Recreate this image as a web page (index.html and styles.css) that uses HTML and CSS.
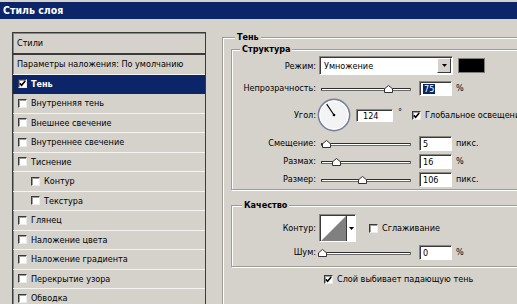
FILE: index.html
```html
<!DOCTYPE html>
<html lang="ru">

<head>
    <meta charset="utf-8">
    <title>Стиль слоя</title>
    <link rel="stylesheet" href="styles.css">
</head>

<body>
    <div class="titlebar">Стиль слоя</div>
    <div class="main">
        <!-- left: list of effects -->
        <div class="styles-list">
            <div class="list-head">Стили</div>
            <div class="list-row">Параметры наложения: По умолчанию</div>
            <div class="list-row selected">
                <span class="check"><svg width="7" height="7" viewBox="0 0 7 7"><path d="M0.8 3.4 L2.6 5.3 L6.2 1" fill="none" stroke="#000" stroke-width="1.6"/></svg></span>Тень
            </div>
            <div class="list-row"><span class="check"></span>Внутренняя тень</div>
            <div class="list-row"><span class="check"></span>Внешнее свечение</div>
            <div class="list-row"><span class="check"></span>Внутреннее свечение</div>
            <div class="list-row"><span class="check"></span>Тиснение</div>
            <div class="list-row sub"><span class="check"></span>Контур</div>
            <div class="list-row sub"><span class="check"></span>Текстура</div>
            <div class="list-row"><span class="check"></span>Глянец</div>
            <div class="list-row"><span class="check"></span>Наложение цвета</div>
            <div class="list-row"><span class="check"></span>Наложение градиента</div>
            <div class="list-row"><span class="check"></span>Перекрытие узора</div>
            <div class="list-row"><span class="check"></span>Обводка</div>
        </div>

        <!-- right: drop shadow options -->
        <div class="options">
            <div class="group outer">
                <span class="group-title title-outer">Тень</span>

                <div class="group structure">
                    <span class="group-title">Структура</span>
                    <div class="row row-mode">
                        <span class="label">Режим:</span>
                        <div class="select">
                            <span class="select-text">Умножение</span>
                            <span class="select-btn"><svg width="5" height="3" viewBox="0 0 5 3"><path d="M0 0 H5 L2.5 3 Z" fill="#000"/></svg></span>
                        </div>
                        <span class="swatch"></span>
                    </div>
                    <div class="row row-opacity">
                        <span class="label">Непрозрачность:</span>
                        <div class="slider"><svg class="thumb" style="left: 75%" width="9" height="8" viewBox="0 0 9 8"><path d="M0.5 7.5 V3.8 L4.5 0.5 L8.5 3.8 V7.5 Z" fill="#fff" stroke="#333"/></svg></div>
                        <span class="field"><span class="sel">75</span></span>
                        <span class="unit">%</span>
                    </div>
                    <div class="row row-angle">
                        <span class="label">Угол:</span>
                        <svg class="dial" width="34" height="34" viewBox="0 0 34 34">
                            <circle cx="17" cy="17" r="15.6" fill="#f3f3f6" stroke="#77809e" stroke-width="1.6"/>
                            <circle cx="17" cy="17" r="14.2" fill="none" stroke="#fff" stroke-width="1"/>
                            <line x1="17" y1="17" x2="9.7" y2="6.1" stroke="#000" stroke-width="1.1"/>
                            <circle cx="17" cy="17" r="1.3" fill="#000"/>
                        </svg>
                        <span class="field field-angle">124</span>
                        <span class="degree">°</span>
                        <span class="check check-light"><svg width="7" height="7" viewBox="0 0 7 7"><path d="M0.8 3.4 L2.6 5.3 L6.2 1" fill="none" stroke="#000" stroke-width="1.6"/></svg></span>
                        <span class="check-label">Глобальное освещение</span>
                    </div>
                    <div class="row row-slider">
                        <span class="label">Смещение:</span>
                        <div class="slider"><svg class="thumb" style="left: 5%" width="9" height="8" viewBox="0 0 9 8"><path d="M0.5 7.5 V3.8 L4.5 0.5 L8.5 3.8 V7.5 Z" fill="#fff" stroke="#333"/></svg></div>
                        <span class="field">5</span>
                        <span class="unit">пикс.</span>
                    </div>
                    <div class="row row-slider">
                        <span class="label">Размах:</span>
                        <div class="slider"><svg class="thumb" style="left: 16%" width="9" height="8" viewBox="0 0 9 8"><path d="M0.5 7.5 V3.8 L4.5 0.5 L8.5 3.8 V7.5 Z" fill="#fff" stroke="#333"/></svg></div>
                        <span class="field">16</span>
                        <span class="unit">%</span>
                    </div>
                    <div class="row row-slider">
                        <span class="label">Размер:</span>
                        <div class="slider"><svg class="thumb" style="left: 45%" width="9" height="8" viewBox="0 0 9 8"><path d="M0.5 7.5 V3.8 L4.5 0.5 L8.5 3.8 V7.5 Z" fill="#fff" stroke="#333"/></svg></div>
                        <span class="field">106</span>
                        <span class="unit">пикс.</span>
                    </div>
                </div>

                <div class="group quality">
                    <span class="group-title title-quality">Качество</span>
                    <div class="row row-contour">
                        <span class="label">Контур:</span>
                        <div class="contour">
                            <svg class="contour-preview" width="25" height="25" viewBox="0 0 25 25">
                                <rect width="25" height="25" fill="#fff"/>
                                <path d="M0 25 L25 0 V25 Z" fill="#808080"/>
                            </svg>
                            <span class="contour-btn"><svg width="5" height="3" viewBox="0 0 5 3"><path d="M0 0 H5 L2.5 3 Z" fill="#000"/></svg></span>
                        </div>
                        <span class="check check-aa"></span>
                        <span class="check-label">Сглаживание</span>
                    </div>
                    <div class="row row-slider row-noise">
                        <span class="label">Шум:</span>
                        <div class="slider"><svg class="thumb" style="left: 0%" width="9" height="8" viewBox="0 0 9 8"><path d="M0.5 7.5 V3.8 L4.5 0.5 L8.5 3.8 V7.5 Z" fill="#fff" stroke="#333"/></svg></div>
                        <span class="field">0</span>
                        <span class="unit">%</span>
                    </div>
                </div>

                <div class="knockout">
                    <span class="check"><svg width="7" height="7" viewBox="0 0 7 7"><path d="M0.8 3.4 L2.6 5.3 L6.2 1" fill="none" stroke="#000" stroke-width="1.6"/></svg></span>
                    <span class="check-label">Слой выбивает падающую тень</span>
                </div>
            </div>
        </div>
    </div>
</body>

</html>
```

FILE: styles.css
```css
body {
    margin: 0;
    overflow: hidden;
    background-color: #d5d2cc;
    font-family: "DejaVu Sans Condensed", "DejaVu Sans", sans-serif;
    font-size: 9px;
    color: #000;
}

/* window title */
.titlebar {
    margin-top: 2px;
    height: 17px;
    line-height: 17px;
    padding-left: 3px;
    background-color: #0c2468;
    color: #fff;
    font-weight: bold;
    font-size: 10.5px;
}

.main {
    display: flex;
    align-items: flex-start;
    padding: 13px 0 0 12px;
}

/* effects list */
.styles-list {
    flex: none;
    width: 192px;
    border: 1px solid #3a3a3a;
    border-bottom: none;
    box-shadow: inset 1px 1px 0 #8a8780;
}

.list-head {
    height: 20px;
    line-height: 20px;
    padding-left: 4px;
    border-bottom: 2px solid #3a3a3a;
}

.list-row {
    display: flex;
    align-items: center;
    height: 18.5px;
    padding-left: 4px;
    border-bottom: 1px solid #f4f3ef;
    white-space: nowrap;
}

.list-row.sub {
    padding-left: 17px;
}

.list-row.selected {
    background-color: #0c2468;
    color: #fff;
    font-weight: bold;
    border-bottom-color: #0c2468;
}

.check {
    flex: none;
    display: inline-flex;
    align-items: center;
    justify-content: center;
    box-sizing: border-box;
    width: 9px;
    height: 9px;
    margin: 0 4px 0 1px;
    background-color: #fff;
    border: 1px solid;
    border-color: #3a3a3a #ecebe7 #ecebe7 #3a3a3a;
    box-shadow: inset 1px 1px 0 #a09d96;
}

/* option groups */
.options {
    flex: none;
    margin: 5px 0 0 16px;
}

.group {
    position: relative;
    border: 1px solid #9f9c95;
    box-shadow: inset 1px 1px 0 #fff, 1px 1px 0 #fff;
}

.group-title {
    position: absolute;
    top: -6px;
    left: 8px;
    padding: 0 2px;
    line-height: 11px;
    background-color: #d5d2cc;
    font-weight: bold;
}

.title-outer {
    left: 12px;
}

.title-quality {
    left: 10px;
}

.outer {
    width: 340px;
    height: 300px;
    border-right: none;
}

.structure {
    width: 330px;
    margin: 11px 0 0 8px;
    padding: 6px 0 1px;
    border-right: none;
}

.quality {
    width: 330px;
    margin: 15px 0 0 8px;
    padding: 8px 0 6px;
    border-right: none;
}

.row {
    display: flex;
    align-items: center;
    white-space: nowrap;
}

.label {
    flex: none;
    width: 84px;
    margin-right: 3px;
    text-align: right;
}

.row-mode {
    height: 19px;
}

.row-opacity {
    height: 18px;
    margin-top: 4px;
}

.row-angle {
    height: 32px;
    margin-top: 2px;
}

.row-slider {
    height: 18px;
}

.row-angle + .row-slider {
    margin-top: 3px;
}

.row-contour {
    height: 28px;
}

.row-noise {
    height: 16px;
    margin-top: 2px;
}

/* dropdown */
.select {
    display: flex;
    box-sizing: border-box;
    width: 134px;
    height: 19px;
    background-color: #fff;
    border: 1px solid;
    border-color: #8a8780 #fff #fff #8a8780;
    box-shadow: inset 1px 1px 0 #3a3a3a;
}

.select-text {
    flex: 1;
    padding: 1px 0 0 4px;
    line-height: 16px;
}

.select-btn {
    display: flex;
    align-items: center;
    justify-content: center;
    width: 12px;
    margin: 1px 1px 1px 0;
    background-color: #d5d2cc;
    border: 1px solid;
    border-color: #fff #3a3a3a #3a3a3a #fff;
}

.swatch {
    width: 25px;
    height: 13px;
    margin-left: 5px;
    background-color: #000;
    border: 1px solid #807d77;
}

/* sliders */
.slider {
    position: relative;
    flex: none;
    width: 88px;
    height: 1px;
    margin: 2px 8px 0 2px;
    background-color: #fff;
    border: 1px solid;
    border-color: #2e2e2e #6a6a6a #6a6a6a #2e2e2e;
    border-radius: 1px;
}

.thumb {
    position: absolute;
    bottom: -3px;
    margin-left: -4px;
}

/* text fields */
.field {
    flex: none;
    box-sizing: border-box;
    width: 33px;
    height: 15px;
    padding: 1px 0 0 3px;
    line-height: 12px;
    background-color: #fff;
    border: 1px solid;
    border-color: #8a8780 #fff #fff #8a8780;
    box-shadow: inset 1px 1px 0 #3a3a3a;
}

.sel {
    background-color: #0c2468;
    color: #fff;
    padding: 0 1px;
}

.unit {
    margin-left: 4px;
}

.dial {
    flex: none;
    margin-left: -2px;
}

.field-angle {
    width: 37px;
    height: 13px;
    margin-left: 5px;
    line-height: 10px;
    padding-left: 6px;
}

.degree {
    margin: -6px 0 0 5px;
}

.check-light {
    margin-left: 10px;
}

/* contour picker */
.contour {
    display: flex;
    box-sizing: border-box;
    width: 37px;
    height: 28px;
    border: 1px solid;
    border-color: #8a8780 #fff #fff #8a8780;
    box-shadow: inset 1px 1px 0 #3a3a3a;
    background-color: #fff;
    padding: 1px 0 0 1px;
}

.contour-preview {
    display: block;
}

.contour-btn {
    flex: 1;
    display: flex;
    align-items: center;
    justify-content: center;
    border-left: 1px solid #3a3a3a;
    margin-top: -1px;
}

.check-aa {
    margin-left: 13px;
}

/* knockout checkbox */
.knockout {
    display: flex;
    align-items: center;
    height: 16px;
    margin: 4px 0 0 100px;
}
```
